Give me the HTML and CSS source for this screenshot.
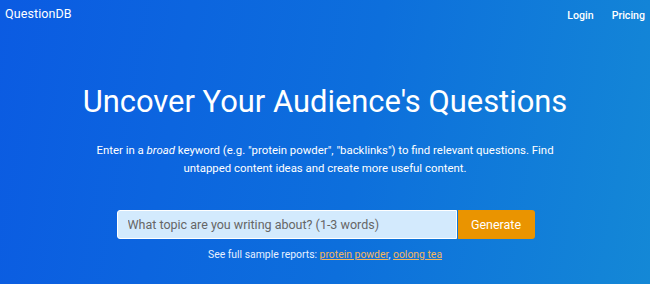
FILE: index.html
```html
<!DOCTYPE html>
<html lang="en">
<head>
  <meta charset="UTF-8" />
  <meta name="viewport" content="width=device-width, initial-scale=1.0" />
  <title>QuestionDB</title>
  <link rel="stylesheet" href="styles.css">
</head>
<body>
  <header>
    <a href="#" class="brand">QuestionDB</a>
    <nav>
      <ul>
        <li><a href="#">Login</a></li>
        <li><a href="#">Pricing</a></li>
      </ul>
    </nav>
  </header>

  <section class="hero">
    <h1>Uncover Your Audience's Questions</h1>
    <p class="lead">Enter in a <em>broad</em> keyword (e.g. "protein powder", "backlinks") to find relevant questions. Find untapped content ideas and create more useful content.</p>

    <form class="search" onsubmit="return false">
      <input type="text" placeholder="What topic are you writing about? (1-3 words)" />
      <button type="submit">Generate</button>
    </form>

    <p class="samples">See full sample reports: <a href="#">protein powder</a>, <a href="#">oolong tea</a></p>
  </section>
</body>
</html>
```

FILE: styles.css
```css
* {
  margin: 0;
  padding: 0;
  box-sizing: border-box;
}

html, body {
  height: 100%;
}

body {
  font-family: Roboto, 'Noto Sans', sans-serif;
  color: #fff;
  background: linear-gradient(100deg, #0b5be2 0%, #0d6fdc 55%, #1488d6 100%);
  overflow: hidden;
}

header {
  display: flex;
  justify-content: space-between;
  align-items: center;
  height: 27px;
  padding: 0 5px;
}

header a {
  color: #fff;
  text-decoration: none;
}

.brand {
  font-size: 12.5px;
  letter-spacing: 0.1px;
}

nav ul {
  list-style: none;
  display: flex;
  gap: 18px;
}

nav a {
  font-size: 10.6px;
  font-weight: 500;
}

.hero {
  display: flex;
  flex-direction: column;
  align-items: center;
  text-align: center;
  padding-top: 57px;
}

.hero h1 {
  font-weight: 400;
  font-size: 30.9px;
  line-height: 36px;
}

.lead {
  margin-top: 21px;
  max-width: 480px;
  font-size: 11.4px;
  line-height: 18px;
}

.search {
  display: flex;
  margin-top: 33px;
  margin-left: 1px;
}

.search input {
  width: 340px;
  height: 29px;
  padding: 0 10px;
  border: 1px solid #fff;
  border-radius: 3px 0 0 3px;
  background: #d3eafd;
  font-family: inherit;
  font-size: 12.5px;
  color: #333;
}

.search input::placeholder {
  color: #666;
}

.search button {
  width: 77px;
  height: 29px;
  margin-left: 1px;
  border: none;
  border-radius: 0 3px 3px 0;
  background: #ea9400;
  color: #fff;
  font-family: inherit;
  font-size: 12.5px;
}

.samples {
  margin-top: 9px;
  font-size: 10.4px;
  color: #e6f0ff;
}

.samples a {
  color: #f3b55d;
}
```
